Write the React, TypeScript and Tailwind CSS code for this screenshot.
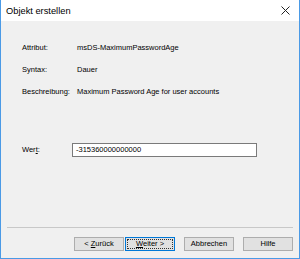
export default function App() {
  const font = { fontFamily: '"Liberation Sans", Arial, sans-serif' };
  return (
    <div
      className="w-[300px] h-[259px] flex flex-col border-x border-b border-[#4a9ae6] bg-[#f0f0f0] text-[7.5px] text-black leading-[12px]"
      style={font}
    >
      {/* title bar */}
      <div className="h-[21px] bg-white flex items-center justify-between pl-[5px] pr-[9px]">
        <span className="text-[9.3px]">Objekt erstellen</span>
        <svg width="9" height="9" viewBox="0 0 9 9">
          <path d="M0.5 0.5 L8.5 8.5 M8.5 0.5 L0.5 8.5" stroke="#222" strokeWidth="1" />
        </svg>
      </div>

      <div className="flex-1 flex flex-col">
        <div className="mt-[21px] pl-[21px] flex flex-col gap-[10px]">
          <div className="flex h-[12px] items-center">
            <span className="w-[55px]">Attribut:</span>
            <span>msDS-MaximumPasswordAge</span>
          </div>
          <div className="flex h-[12px] items-center">
            <span className="w-[55px]">Syntax:</span>
            <span>Dauer</span>
          </div>
          <div className="flex h-[12px] items-center">
            <span className="w-[55px]">Beschreibung:</span>
            <span>Maximum Password Age for user accounts</span>
          </div>
        </div>

        <div className="mt-[45px] pl-[21px] flex items-center">
          <span className="w-[50px]">
            Wer<span className="underline">t</span>:
          </span>
          <div className="w-[185px] h-[14px] bg-white border border-[#7a7a7a] flex items-center px-[3px]">
            -315360000000000
          </div>
        </div>

        <div className="mt-auto mx-[6px] border-t border-[#c8c8c8]" />
        <div className="flex justify-end pr-[6px] mt-[9px] mb-[7px]">
          <button className="w-[50px] h-[14px] bg-[#e1e1e1] border border-[#adadad] flex items-center justify-center whitespace-pre">
            {"< "}
            <span className="underline">Z</span>urück
          </button>
          <button className="ml-[1px] w-[50px] h-[14px] bg-[#e1e1e1] border border-[#0078d7] flex items-center justify-center p-[1px]">
            <span className="w-full h-full border border-dotted border-[#333] flex items-center justify-center whitespace-pre">
              <span className="underline">W</span>
              {"eiter >"}
            </span>
          </button>
          <button className="ml-[9px] w-[50px] h-[14px] bg-[#e1e1e1] border border-[#adadad] flex items-center justify-center">
            Abbrechen
          </button>
          <button className="ml-[9px] w-[50px] h-[14px] bg-[#e1e1e1] border border-[#adadad] flex items-center justify-center">
            Hilfe
          </button>
        </div>
      </div>
    </div>
  );
}
